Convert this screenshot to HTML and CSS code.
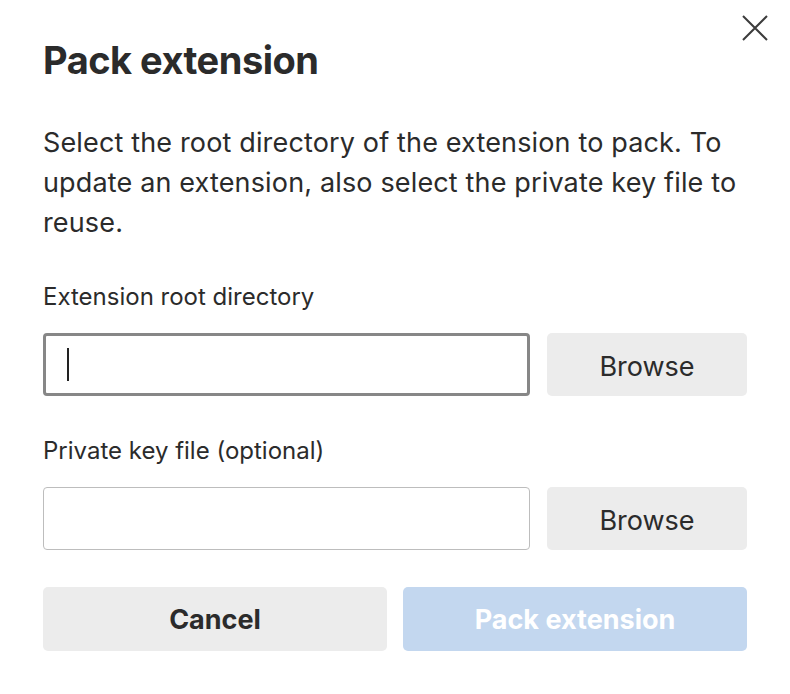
FILE: index.html
```html
<!DOCTYPE html>
<html>
<head>
<meta charset="utf-8">
<link rel="stylesheet" href="styles.css">
</head>
<body>
<div class="dialog">
  <button class="close" aria-label="Close">
    <svg width="26" height="26" viewBox="0 0 26 26"><path d="M1 1 L25 25 M25 1 L1 25" stroke="#3c3c3c" stroke-width="2" fill="none"/></svg>
  </button>
  <h1 class="title">Pack extension</h1>
  <p class="desc">Select the root directory of the extension to pack. To update an extension, also select the private key file to reuse.</p>
  <div class="field first">
    <label class="label">Extension root directory</label>
    <div class="row">
      <div class="input focused"><span class="caret"></span></div>
      <button class="btn browse">Browse</button>
    </div>
  </div>
  <div class="field second">
    <label class="label">Private key file (optional)</label>
    <div class="row">
      <div class="input"></div>
      <button class="btn browse">Browse</button>
    </div>
  </div>
  <div class="actions">
    <button class="btn action cancel">Cancel</button>
    <button class="btn action primary">Pack extension</button>
  </div>
</div>
</body>
</html>
```
FILE: styles.css
```css
html, body { margin: 0; padding: 0; background: #fff; }
body { font-family: Inter, "Noto Sans", sans-serif; color: #2b2b2b; }
.dialog { position: relative; width: 790px; height: 694px; box-sizing: border-box; padding: 38px 43px 0 43px; }
.close { position: absolute; top: 15px; right: 22px; border: 0; background: none; padding: 0; width: 26px; height: 26px; }
.title { margin: 0; font-size: 38px; font-weight: 700; line-height: 44px; letter-spacing: -0.5px; }
.desc { margin: 41px 0 0 0; font-size: 27px; line-height: 40px; letter-spacing: 0.15px; }
.label { display: block; font-size: 24px; line-height: 28px; }
.field.first { margin-top: 40px; }
.field.second { margin-top: 41px; }
.row { display: flex; gap: 17px; margin-top: 22px; }
.input { flex: 0 0 487px; height: 63px; box-sizing: border-box; border: 1.5px solid #bdbdbd; border-radius: 4px; display: flex; align-items: center; padding-left: 22px; }
.input.focused { border: 3px solid #878787; padding-left: 21px; }
.caret { width: 2px; height: 33px; background: #222; }
.btn { border: 0; border-radius: 5px; font-family: Inter, "Noto Sans", sans-serif; cursor: default; padding: 0; }
.browse { flex: 0 0 200px; height: 63px; background: #ececec; font-size: 27px; color: #2b2b2b; padding-top: 3px; }
.actions { display: flex; gap: 16px; margin-top: 37px; }
.action { flex: 1; height: 64px; font-size: 27px; font-weight: 700; }
.cancel { background: #ececec; color: #2b2b2b; }
.primary { background: #c3d7ef; color: #fff; }
```
